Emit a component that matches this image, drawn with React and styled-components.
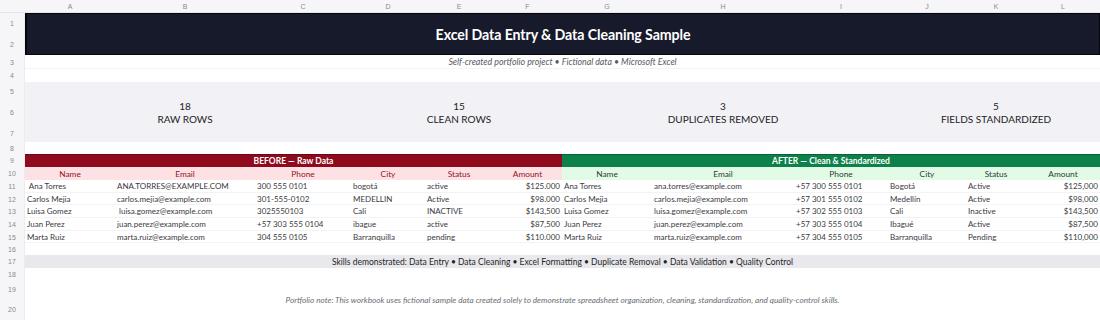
import React from "react";
import styled, { createGlobalStyle } from "styled-components";

const GlobalStyle = createGlobalStyle`
  html, body { margin: 0; padding: 0; background: #ffffff; }
  body { font-family: Lato, "Open Sans", Arial, sans-serif; }
  * { box-sizing: border-box; }
`;

const COLS = "25px 90px 140px 96px 74px 68px 69px 90px 142px 94px 78px 60px 74px";
const LETTERS = ["A", "B", "C", "D", "E", "F", "G", "H", "I", "J", "K", "L"];

const Sheet = styled.div`
  width: 1100px;
  height: 320px;
  overflow: hidden;
  display: flex;
  flex-direction: column;
  background: #ffffff;
`;

const Row = styled.div`
  display: grid;
  grid-template-columns: ${COLS};
  height: ${(p) => p.$h}px;
  flex: none;
`;

const ColHeadRow = styled(Row)`
  background: #f6f6f8;
  border-bottom: 1px solid #e6e6ea;
`;

const ColLetter = styled.div`
  font-family: "Liberation Sans", Arial, sans-serif;
  font-size: 7px;
  color: #8a8a90;
  display: flex;
  align-items: center;
  justify-content: center;
`;

const RowNums = styled.div`
  background: #f6f6f8;
  display: flex;
  flex-direction: column;
  border-right: 1px solid #ececf0;
`;

const RowNum = styled.div`
  flex: ${(p) => p.$grow || 1} 1 0;
  display: flex;
  align-items: center;
  justify-content: center;
  font-family: "Liberation Sans", Arial, sans-serif;
  font-size: 7px;
  color: #8a8a90;
`;

const TitleBar = styled.div`
  grid-column: 2 / -1;
  background: #161a2b;
  border: 1px solid #05060b;
  border-left-width: 2px;
  display: flex;
  align-items: center;
  justify-content: center;
  color: #ffffff;
  font-weight: 700;
  font-size: 14.2px;
  letter-spacing: -0.1px;
`;

const Subtitle = styled.div`
  grid-column: 2 / -1;
  display: flex;
  align-items: center;
  justify-content: center;
  font-style: italic;
  font-size: 8.8px;
  color: #555a63;
  border-bottom: 1px solid #f4f4f6;
`;

const Blank = styled.div`
  grid-column: 2 / -1;
  background: ${(p) => p.$bg || "#ffffff"};
`;

const StatsBand = styled.div`
  grid-column: 2 / -1;
  background: #f2f2f6;
  display: grid;
  grid-template-columns: 90px 140px 96px 74px 68px 69px 90px 142px 94px 78px 60px 74px;
  align-items: center;
`;

const Stat = styled.div`
  grid-column: ${(p) => p.$col};
  display: flex;
  flex-direction: column;
  align-items: center;
  white-space: nowrap;
  color: #1c1c22;
  font-size: 10px;
  line-height: 13px;
  padding-top: 2px;
`;

const SectionBar = styled.div`
  grid-column: ${(p) => p.$span};
  background: ${(p) => p.$bg};
  color: #ffffff;
  font-weight: 700;
  font-size: 8.5px;
  display: flex;
  align-items: center;
  justify-content: center;
  border-top: 1px solid ${(p) => p.$edge};
`;

const HeadCell = styled.div`
  background: ${(p) => p.$bg};
  color: ${(p) => p.$fg};
  font-size: 8.3px;
  display: flex;
  align-items: center;
  justify-content: center;
  white-space: nowrap;
`;

const Cell = styled.div`
  font-size: 8px;
  color: #3a3a40;
  display: flex;
  align-items: center;
  justify-content: ${(p) => (p.$right ? "flex-end" : "flex-start")};
  padding: 0 2px;
  white-space: pre;
  overflow: visible;
  border-bottom: 1px solid #f3f3f5;
`;

const SkillsBar = styled.div`
  grid-column: 2 / -1;
  background: #e9e8ed;
  display: flex;
  align-items: center;
  justify-content: center;
  font-size: 8.5px;
  color: #1f1f25;
`;

const Note = styled.div`
  grid-column: 2 / -1;
  display: flex;
  align-items: center;
  justify-content: center;
  font-style: italic;
  font-size: 8.2px;
  color: #6a6d74;
  padding-bottom: 1px;
`;

const before = [
  [" Ana Torres", "ANA.TORRES@EXAMPLE.COM", "300 555 0101", "bogotá", "active", "$125.000"],
  ["Carlos Mejia", "carlos.mejia@example.com", "301-555-0102", "MEDELLIN", "Active", "$98.000"],
  ["Luisa Gomez", " luisa.gomez@example.com", "3025550103", "Cali", "INACTIVE", "$143,500"],
  ["Juan Perez", "juan.perez@example.com", "+57 303 555 0104", "ibague", "active", "$87,500"],
  ["Marta Ruiz", "marta.ruiz@example.com", "304 555 0105", "Barranquilla", "pending", "$110.000"],
];

const after = [
  ["Ana Torres", "ana.torres@example.com", "+57 300 555 0101", "Bogotá", "Active", "$125,000"],
  ["Carlos Mejia", "carlos.mejia@example.com", "+57 301 555 0102", "Medellín", "Active", "$98,000"],
  ["Luisa Gomez", "luisa.gomez@example.com", "+57 302 555 0103", "Cali", "Inactive", "$143,500"],
  ["Juan Perez", "juan.perez@example.com", "+57 303 555 0104", "Ibagué", "Active", "$87,500"],
  ["Marta Ruiz", "marta.ruiz@example.com", "+57 304 555 0105", "Barranquilla", "Pending", "$110,000"],
];

const heads = ["Name", "Email", "Phone", "City", "Status", "Amount"];

const stats = [
  { col: 2, n: "18", label: "RAW ROWS" },
  { col: 5, n: "15", label: "CLEAN ROWS" },
  { col: 8, n: "3", label: "DUPLICATES REMOVED" },
  { col: 11, n: "5", label: "FIELDS STANDARDIZED" },
];

function Nums({ items }) {
  return (
    <RowNums>
      {items.map(([n, g]) => (
        <RowNum key={n} $grow={g}>
          {n}
        </RowNum>
      ))}
    </RowNums>
  );
}

export default function App() {
  return (
    <>
      <GlobalStyle />
      <Sheet>
        <ColHeadRow $h={13}>
          <ColLetter />
          {LETTERS.map((l) => (
            <ColLetter key={l}>{l}</ColLetter>
          ))}
        </ColHeadRow>

        <Row $h={42}>
          <Nums items={[[1], [2]]} />
          <TitleBar>Excel Data Entry &amp; Data Cleaning Sample</TitleBar>
        </Row>

        <Row $h={14}>
          <Nums items={[[3]]} />
          <Subtitle>Self-created portfolio project • Fictional data • Microsoft Excel</Subtitle>
        </Row>

        <Row $h={13}>
          <Nums items={[[4]]} />
          <Blank />
        </Row>

        <Row $h={60}>
          <Nums items={[[5, 0.9], [6, 1.2], [7, 0.9]]} />
          <StatsBand>
            {stats.map((s) => (
              <Stat key={s.label} $col={s.col}>
                <span>{s.n}</span>
                <span>{s.label}</span>
              </Stat>
            ))}
          </StatsBand>
        </Row>

        <Row $h={12}>
          <Nums items={[[8]]} />
          <Blank />
        </Row>

        <Row $h={13}>
          <Nums items={[[9]]} />
          <SectionBar $span="2 / 8" $bg="#8e0a1c" $edge="#6d0613">
            BEFORE — Raw Data
          </SectionBar>
          <SectionBar $span="8 / 14" $bg="#0c8149" $edge="#086236">
            AFTER — Clean &amp; Standardized
          </SectionBar>
        </Row>

        <Row $h={13}>
          <Nums items={[[10]]} />
          {heads.map((h) => (
            <HeadCell key={"b" + h} $bg="#fde1e4" $fg="#8c1526">
              {h}
            </HeadCell>
          ))}
          {heads.map((h) => (
            <HeadCell key={"a" + h} $bg="#e2fbe7" $fg="#2e3a33">
              {h}
            </HeadCell>
          ))}
        </Row>

        {before.map((b, i) => (
          <Row $h={12.7} key={i}>
            <Nums items={[[11 + i]]} />
            {b.map((v, j) => (
              <Cell key={"b" + j} $right={j === 5}>
                {v}
              </Cell>
            ))}
            {after[i].map((v, j) => (
              <Cell key={"a" + j} $right={j === 5}>
                {v}
              </Cell>
            ))}
          </Row>
        ))}

        <Row $h={12}>
          <Nums items={[[16]]} />
          <Blank />
        </Row>

        <Row $h={13}>
          <Nums items={[[17]]} />
          <SkillsBar>
            Skills demonstrated: Data Entry • Data Cleaning • Excel Formatting • Duplicate Removal • Data Validation • Quality Control
          </SkillsBar>
        </Row>

        <Row $h={13}>
          <Nums items={[[18]]} />
          <Blank />
        </Row>

        <Row $h={39}>
          <Nums items={[[19, 0.85], [20, 1.15]]} />
          <Note>
            Portfolio note: This workbook uses fictional sample data created solely to demonstrate spreadsheet organization, cleaning, standardization, and quality-control skills.
          </Note>
        </Row>
      </Sheet>
    </>
  );
}
